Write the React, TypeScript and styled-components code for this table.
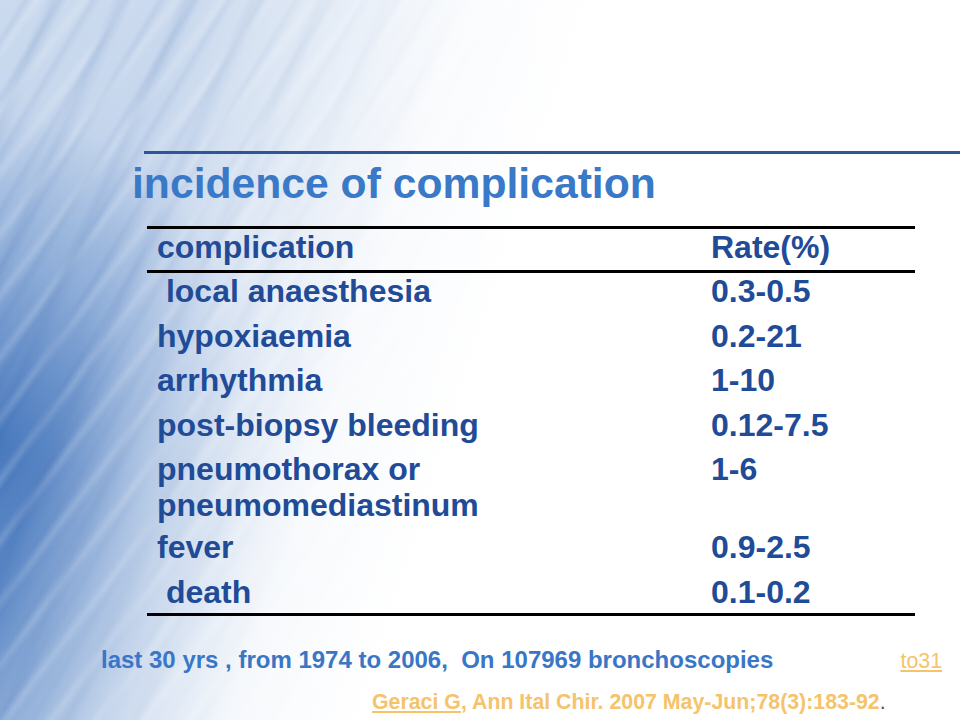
import React from "react";
import styled, { createGlobalStyle } from "styled-components";

const GlobalStyle = createGlobalStyle`
  html, body {
    margin: 0;
    padding: 0;
    background: #fff;
  }
  body {
    font-family: "Liberation Sans", Arial, Helvetica, sans-serif;
  }
`;

const rows = [
  { name: " local anaesthesia", rate: "0.3-0.5" },
  { name: "hypoxiaemia", rate: "0.2-21" },
  { name: "arrhythmia", rate: "1-10" },
  { name: "post-biopsy bleeding", rate: "0.12-7.5" },
  { name: "pneumothorax or pneumomediastinum", rate: "1-6", pad: 6 },
  { name: "fever", rate: "0.9-2.5" },
  { name: " death", rate: "0.1-0.2", pad: 3 },
];

export default function App() {
  return (
    <>
      <GlobalStyle />
      <Slide>
        <TopRule />
        <Title>incidence of complication</Title>
        <Table>
          <Row $pad={5} $head>
            <Cell>complication</Cell>
            <Cell>Rate(%)</Cell>
          </Row>
          {rows.map((r) => (
            <Row key={r.name} $pad={r.pad}>
              <Cell>{r.name}</Cell>
              <Cell>{r.rate}</Cell>
            </Row>
          ))}
        </Table>
        <FooterRow>
          <Note>last 30 yrs , from 1974 to 2006,&nbsp; On 107969 bronchoscopies</Note>
          <Link>to31</Link>
        </FooterRow>
        <Citation>
          <Underlined>Geraci G</Underlined>, Ann Ital Chir. 2007 May-Jun;78(3):183-92
          <Dot>.</Dot>
        </Citation>
      </Slide>
    </>
  );
}

// slide background: pale blue streaky texture on the left fading to white
const Slide = styled.div`
  width: 960px;
  height: 720px;
  overflow: hidden;
  display: flex;
  flex-direction: column;
  background:
    linear-gradient(
      108deg,
      rgba(255, 255, 255, 0) 0%,
      rgba(255, 255, 255, 0) 16%,
      rgba(255, 255, 255, 0.5) 28%,
      rgba(255, 255, 255, 0.9) 39%,
      #fff 50%
    ),
    repeating-linear-gradient(
      121deg,
      rgba(30, 80, 160, 0) 0px,
      rgba(30, 80, 160, 0) 17px,
      rgba(30, 80, 160, 0.07) 22px,
      rgba(30, 80, 160, 0) 29px
    ),
    repeating-linear-gradient(
      114deg,
      rgba(30, 80, 160, 0) 0px,
      rgba(30, 80, 160, 0) 41px,
      rgba(30, 80, 160, 0.08) 49px,
      rgba(30, 80, 160, 0) 61px
    ),
    repeating-linear-gradient(
      127deg,
      rgba(255, 255, 255, 0) 0px,
      rgba(255, 255, 255, 0) 23px,
      rgba(255, 255, 255, 0.16) 30px,
      rgba(255, 255, 255, 0) 37px
    ),
    radial-gradient(
      ellipse 260px 330px at 0% 62%,
      rgba(45, 100, 178, 0.7) 0%,
      rgba(70, 120, 190, 0.3) 55%,
      rgba(120, 160, 210, 0) 100%
    ),
    radial-gradient(
      ellipse 340px 520px at 0% 85%,
      rgba(60, 112, 185, 0.6) 0%,
      rgba(90, 135, 198, 0.3) 50%,
      rgba(120, 160, 210, 0) 100%
    ),
    linear-gradient(180deg, #cbdaee 0%, #bccfe9 50%, #b0c7e6 100%);
`;

const TopRule = styled.div`
  margin: 151px 0 0 144px;
  height: 3px;
  background: #2f5597;
`;

const Title = styled.h1`
  margin: 5px 0 0 132px;
  font-size: 42.67px;
  line-height: 48px;
  font-weight: bold;
  color: #3a78c8;
`;

const Table = styled.div`
  margin: 19px 0 0 147px;
  width: 768px;
  border-top: 3px solid #000;
  border-bottom: 3px solid #000;
`;

const Row = styled.div<{ $pad?: number; $head?: boolean }>`
  display: grid;
  grid-template-columns: 554px 1fr;
  padding: 0 0 ${(p) => p.$pad ?? 8.5}px 10px;
  border-bottom: ${(p) => (p.$head ? "3px solid #000" : "none")};
`;

const Cell = styled.div`
  font-size: 32px;
  line-height: 36px;
  font-weight: bold;
  color: #214b97;
  white-space: pre-wrap;
`;

const FooterRow = styled.div`
  display: flex;
  justify-content: space-between;
  align-items: baseline;
  margin-top: 30.5px;
  padding: 0 18px 0 101px;
`;

const Note = styled.span`
  font-size: 24px;
  line-height: 28px;
  font-weight: bold;
  color: #3a76c6;
`;

const Link = styled.span`
  font-size: 21.33px;
  color: #f5c36a;
  text-decoration: underline;
`;

const Citation = styled.div`
  margin: 16px 0 0 372px;
  font-size: 21.33px;
  line-height: 24px;
  font-weight: bold;
  color: #f5c36a;
`;

const Underlined = styled.span`
  text-decoration: underline;
`;

const Dot = styled.span`
  font-weight: normal;
  color: #555;
`;
